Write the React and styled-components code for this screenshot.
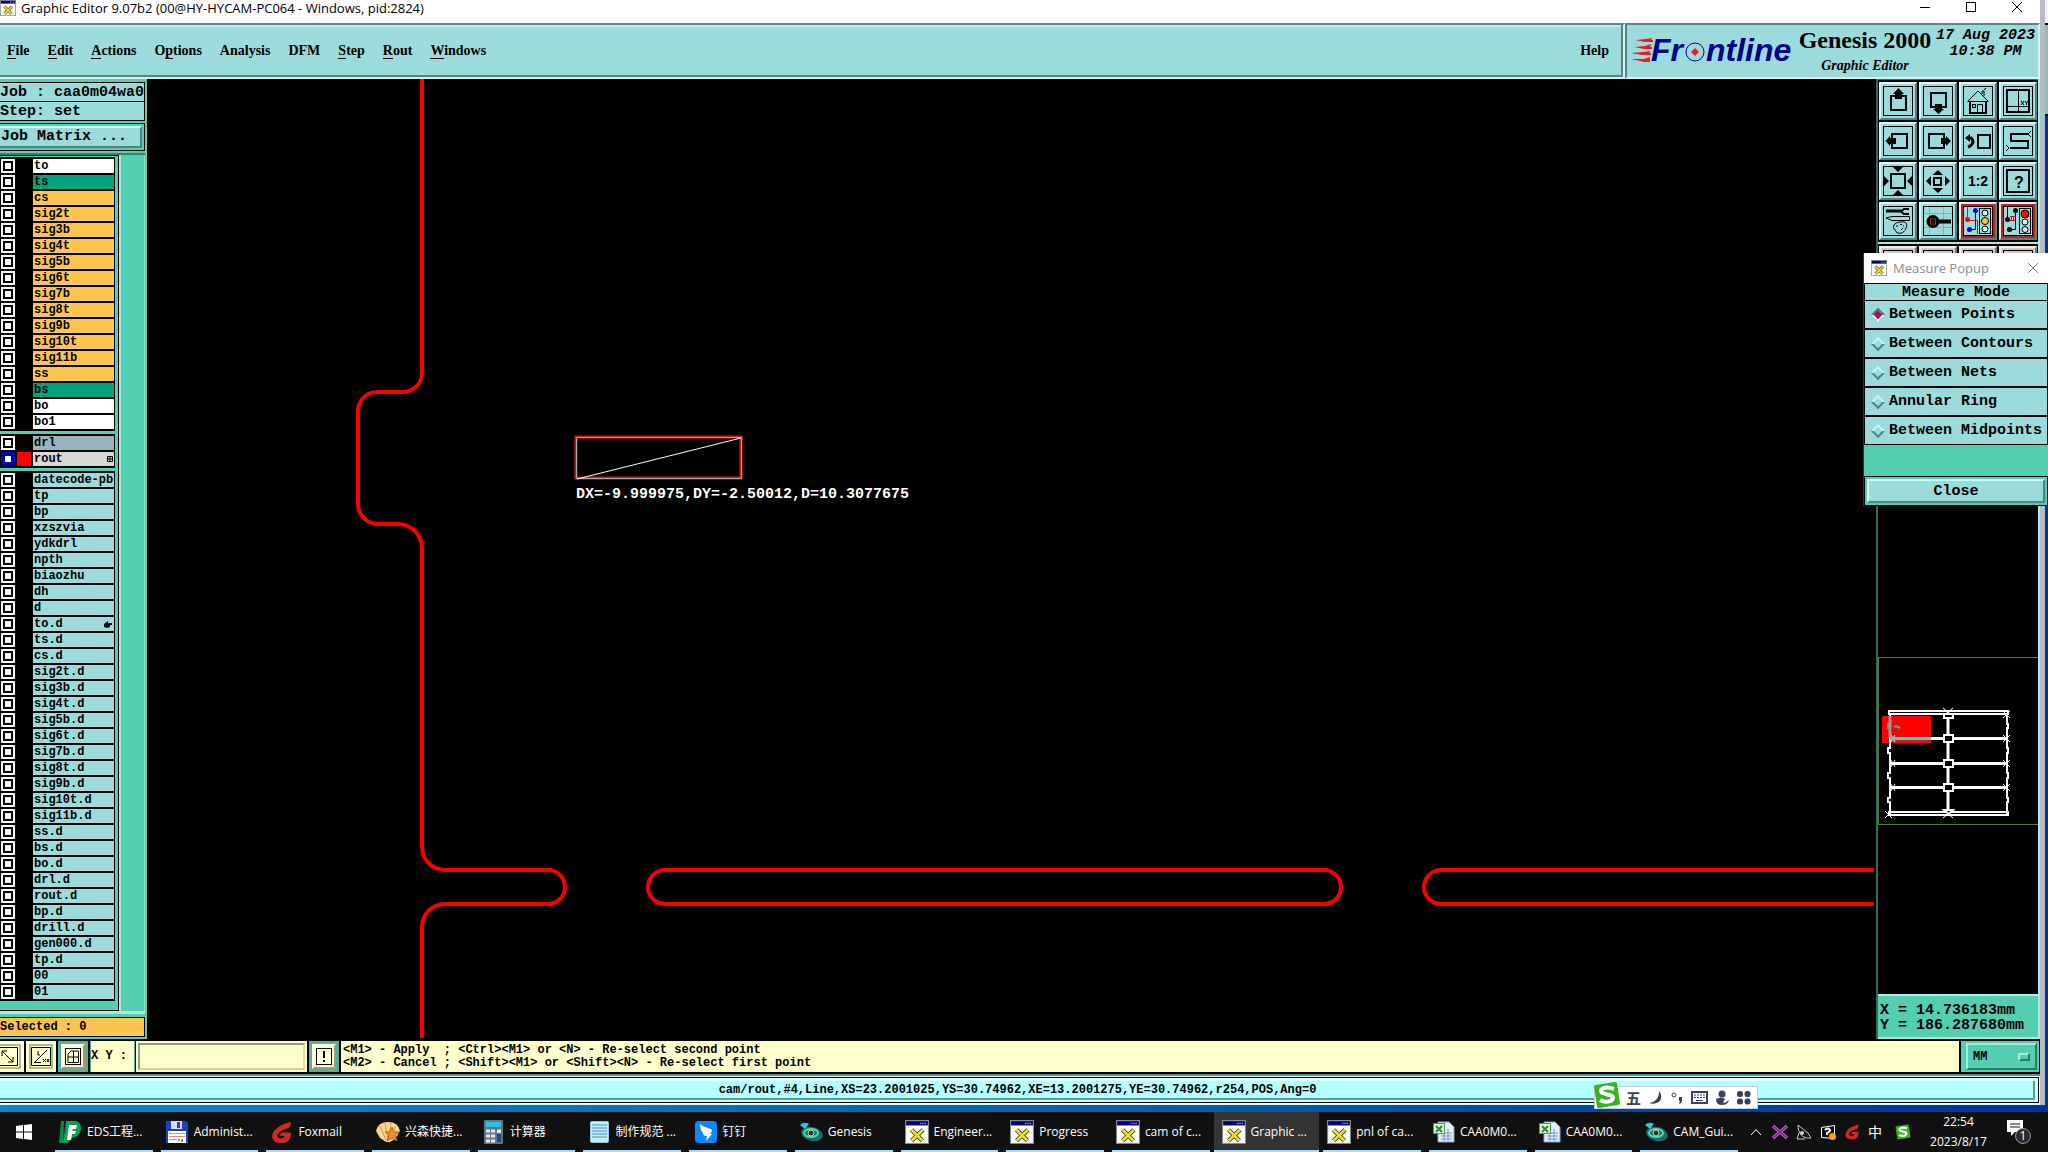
// App.jsx
import React, { useState } from 'react';
import styled, { createGlobalStyle, css } from 'styled-components';

const MONO = '"Liberation Mono", monospace';
const SERIF = '"Liberation Serif", serif';
const UI = '"Open Sans", "Noto Sans CJK SC", sans-serif';

const GlobalStyle = createGlobalStyle`
    * {
        box-sizing: border-box;
    }

    body {
        margin: 0;
        background: #0b4fa0;
    }

    button, input, select {
        margin: 0;
        padding: 0;
        border: 0;
        border-radius: 0;
        background: none;
        font: inherit;
        color: inherit;
    }
`;

const Desktop = styled.div`
    position: relative;
    display: flex;
    flex-direction: column;
    min-height: 100vh;
    overflow: hidden;
    background: linear-gradient(to right, #0a86cc 0%, #0a64b0 50%, #003399 100%);
    color: #000;
`;

const Workspace = styled.div`
    display: flex;
    flex: 1;
    margin-bottom: 7px;
`;

const Window = styled.div`
    flex: 1;
    min-width: 0;
    display: flex;
    flex-direction: column;
    background: #000;
`;

/* slice of the windows lying behind, at the right screen edge */
const Behind = styled.div`
    width: 8px;
    display: flex;
    flex-direction: column;
    border-left: 5px solid #b8bcc4;
    background: #003399;
`;

const BehindTitle = styled.div`
    height: 23px;
    background: #f4f4f4;
`;

const BehindBody = styled.div`
    height: 93px;
    border-top: 2px solid #000;
    border-bottom: 2px solid #000;
    background: #8dbfbf;
`;

/* ---------- title bar ---------- */

const TitleBar = styled.div`
    display: flex;
    align-items: center;
    height: 23px;
    background: #fff;
    font: 13px/16px ${UI};
`;

const TitleText = styled.span`
    flex: 1;
    padding: 0 0 7px 5px;
`;

const TitleIcon = styled.span`
    display: flex;
    padding-bottom: 8px;
`;

const WinButtons = styled.div`
    display: flex;
    padding: 0 0 8px;

    button {
        width: 46px;
        height: 14px;
        display: flex;
        align-items: center;
        justify-content: center;
    }
`;

/* ---------- header ---------- */

const Header = styled.div`
    display: flex;
    height: 56px;
    background: #9cdbdb;
`;

const panelEdge = css`
    border-style: solid;
    border-width: 2px;
    border-color: #5a8484 #d0f4f4 #d0f4f4 #5a8484;
`;

const Menu = styled.nav`
    flex: 1;
    display: flex;
    align-items: center;
    gap: 18px;
    padding: 0 14px 0 7px;
    border-top: 2px solid #5a8484;
    border-bottom: 2px solid #d0f4f4;
    border-right: 2px solid #d0f4f4;
    box-shadow: inset -2px -2px #5a8484, inset 0 2px #c4ecec;
    font: bold 14px/18px ${SERIF};
`;

const MenuItem = styled.button`
    margin-left: ${(p) => (p.$last ? 'auto' : '0')};

    span {
        border-bottom: 1px solid #000;
    }
`;

const Brand = styled.div`
    ${panelEdge}
    display: flex;
    width: 415px;
    padding: 3px 3px 0 5px;
`;

const Logo = styled.svg`
    width: 162px;
    height: 44px;
    margin-top: 2px;
`;

const Product = styled.div`
    flex: 1;
    text-align: center;
    white-space: nowrap;
    font: bold 24px/24px ${SERIF};

    div {
        font: italic bold 14px/28px ${SERIF};
    }
`;

const Clock = styled.div`
    text-align: center;
    white-space: pre;
    font: italic bold 15px/16px ${MONO};
`;

/* ---------- main area ---------- */

const Main = styled.div`
    flex: 1;
    display: flex;
    min-height: 0;
    background: #000;
`;

const Sidebar = styled.aside`
    width: 147px;
    display: flex;
    flex-direction: column;
    padding: 3px 0 2px;
    border-right: 2px solid #69c4ae;
    background: #53ceb0;
`;

const InfoBox = styled.div`
    height: ${(p) => (p.$tall ? '20px' : '19px')};
    border: solid #000;
    border-width: 1px 1px ${(p) => (p.$join ? '0' : '1px')} 0;
    background: ${(p) => (p.$gold ? '#fdc550' : '#9cdbdb')};
    font: bold ${(p) => (p.$small ? '12px' : '15px')}/19px ${MONO};
    white-space: pre;
    overflow: hidden;
`;

const MatrixFrame = styled.div`
    margin: 2px 0;
    padding: 2px 2px 2px 0;
    border: solid #000;
    border-width: 1px 1px 1px 0;
`;

const bevel = css`
    border-style: solid;
    border-width: 2px;
    border-color: #d4f8f8 #4f8282 #4f8282 #d4f8f8;
`;

const MatrixButton = styled.button`
    ${bevel}
    border-left: 0;
    display: block;
    width: 100%;
    height: 22px;
    padding-left: 1px;
    background: #9cdbdb;
    font: bold 15px/18px ${MONO};
    text-align: left;
`;

const ListArea = styled.div`
    flex: 1;
    display: flex;
    margin-bottom: 3px;
    border-top: 2px solid #35806e;
    border-bottom: 3px solid #a9ecdc;
`;

const ListFrame = styled.div`
    width: 119px;
    padding: 1px 3px 6px 0;
    border: solid #000;
    border-width: 1px 1px 1px 0;
`;

const Scroller = styled.div`
    flex: 1;
    border-left: 2px solid #a9ecdc;
    border-right: 1px solid #8fe0ca;
`;

const LayerGroup = styled.ul`
    display: flex;
    flex-direction: column;
    gap: 2px;
    margin: 0 0 3px;
    padding: 2px 1px 2px 1px;
    list-style: none;
    background: #000;
`;

const LayerRow = styled.li`
    display: grid;
    grid-template-columns: 14px 14px 1fr;
    gap: 2px;
    height: 14px;
`;

const LayerCheck = styled.input`
    appearance: none;
    width: 14px;
    height: 14px;
    border: 2px solid ${(p) => (p.$active ? '#0000b8' : '#fff')};
    background: #fff;
    box-shadow: inset 0 0 0 2px ${(p) => (p.$active ? '#0000b8' : '#000')};
`;

const Swatch = styled.span`
    background: ${(p) => p.$color || '#000'};
`;

const LayerName = styled.label`
    display: flex;
    align-items: center;
    justify-content: space-between;
    padding: 0 1px;
    background: ${(p) => p.$bg};
    font: bold 12px/14px ${MONO};
    white-space: nowrap;
    overflow: hidden;
`;

const Canvas = styled.div`
    flex: 1;
    min-width: 0;
    position: relative;
    background: #000;
    overflow: hidden;

    svg {
        position: absolute;
        width: 100%;
        height: 100%;
    }
`;

const ToolColumn = styled.aside`
    width: 164px;
    display: flex;
    flex-direction: column;
    border-left: 2px solid #2f6b5e;
    border-right: 2px solid #a9ecdc;
`;

const ToolGrid = styled.div`
    display: grid;
    grid-template-columns: repeat(4, 38px);
    gap: 2px;
    padding: 2px 1px;
    border-top: ${(p) => (p.$gray ? '0' : '1px')} solid #2f6b5e;
    border-bottom: 2px solid #a9ecdc;
`;

const ToolButton = styled.button`
    width: 38px;
    height: 38px;
    border: 2px solid;
    border-color: ${(p) => (p.$gray ? '#eee #777 #777 #eee' : '#d4f8f8 #4f8282 #4f8282 #d4f8f8')};
    padding: 2px;
    background: ${(p) => (p.$gray ? '#cfc8cc' : '#9cdbdb')};
    box-shadow: ${(p) => (p.$hot ? 'inset 0 0 0 2px #d01818' : 'none')};

    svg {
        display: block;
        width: 30px;
        height: 30px;
        background: ${(p) => (p.$gray ? '#cfc8cc' : '#9cdbdb')};
    }
`;

const Overview = styled.div`
    flex: 1;
    display: flex;
    flex-direction: column;
    justify-content: flex-end;
    padding-bottom: 169px;

    svg {
        display: block;
        width: 160px;
        height: 168px;
    }
`;

const Coords = styled.div`
    padding: 7px 0 4px 2px;
    border-top: 2px solid #a9ecdc;
    border-bottom: 2px solid #a9ecdc;
    background: #53ceb0;
    font: bold 15px/15px ${MONO};
    white-space: pre;
`;

/* ---------- command line ---------- */

const CommandBar = styled.div`
    display: flex;
    height: 35px;
    padding: 2px 0;
    background: #000;
`;

const CmdButton = styled.button`
    width: ${(p) => (p.$narrow ? '24px' : '30px')};
    margin-right: 2px;
    padding: 3px;
    display: flex;
    justify-content: flex-end;
    background: ${(p) => (p.$on ? '#53b09c' : '#ffffcc')};
    overflow: hidden;

    svg {
        flex: none;
        width: 24px;
        height: 25px;
        border: 2px solid;
        border-color: ${(p) => (p.$on ? '#ffffe8 #a09878 #a09878 #ffffe8' : '#b8b890')};
        background: #ffffcc;
    }
`;

const XYLabel = styled.label`
    width: 45px;
    border-left: 1px solid #53b09c;
    border-right: 1px solid #53b09c;
    background: #ffffcc;
    font: bold 12px/31px ${MONO};
    white-space: pre;
`;

const XYField = styled.div`
    width: 171px;
    margin: 0 2px 0 1px;
    padding: 2px;
    background: #ffffcc;
`;

const XYInput = styled.input`
    width: 100%;
    height: 27px;
    border: 2px solid;
    border-color: #98987a #e0e0b0 #d0d0a8 #98987a;
    padding: 0 4px;
    outline: none;
    font: bold 12px/20px ${MONO};
`;

const Hints = styled.div`
    flex: 1;
    padding: 3px 2px;
    background: #ffffcc;
    font: bold 12px/13px ${MONO};
    white-space: pre;
`;

const UnitBox = styled.div`
    position: relative;
    width: 78px;
    margin: 0 1px 0 2px;
    padding: 2px 2px 2px 5px;
    background: #53ceb0;

    svg {
        position: absolute;
        right: 9px;
        top: 12px;
    }
`;

const UnitSelect = styled.select`
    appearance: none;
    width: 100%;
    height: 27px;
    padding-left: 5px;
    border: 2px solid;
    border-color: #a9ecdc #2f7766 #2f7766 #a9ecdc;
    background: #53ceb0;
    font: bold 12px/16px ${MONO};
`;

const StatusFrame = styled.div`
    padding: 1px 1px 2px 0;
    border-top: 2px solid #5f8f8f;
    background: #dffcfc;
`;

const StatusLine = styled.div`
    height: 26px;
    padding-right: 3px;
    border: solid #000;
    border-width: 1px 1px 1px 0;
    background: #b4ffff;
    box-shadow: inset 0 3px #dcffff, inset -3px -2px #c4ffff, inset -5px -4px #5f9a9a;
    font: bold 12px/24px ${MONO};
    text-align: center;
`;

/* ---------- popup ---------- */

const Popup = styled.form`
    position: absolute;
    top: 253px;
    right: 0;
    width: 185px;
    background: #53ceb0;
    border: solid #333;
    border-width: 0 0 0 1px;
    font: bold 15px/17px ${MONO};
`;

const PopupTitle = styled.div`
    display: flex;
    align-items: center;
    height: 30px;
    padding: 0 9px 0 7px;
    background: #fff;
    color: #8c8c8c;
    font: 13px/16px ${UI};

    span {
        flex: 1;
        padding-left: 6px;
    }

    button {
        display: flex;
    }
`;

const PopupHead = styled.div`
    height: 17px;
    border: 1px solid #000;
    border-bottom: 0;
    background: #9cdbdb;
    line-height: 18px;
    text-align: center;
`;

const Option = styled.label`
    display: flex;
    align-items: center;
    height: 29px;
    padding: 0 0 0 5px;
    border: 1px solid #000;
    background: #9cdbdb;
    white-space: nowrap;
`;

const Diamond = styled.input`
    appearance: none;
    flex: none;
    width: 10px;
    height: 10px;
    margin: 0 6px 0 3px;
    border: 2px solid;
    border-color: #c8f4f4 #4f8282 #4f8282 #c8f4f4;
    transform: rotate(45deg);

    &:checked {
        border-color: #4f8282 #e8ffff #e8ffff #4f8282;
        background: #c0005a;
    }
`;

const CloseFrame = styled.div`
    margin-top: 31px;
    padding: 2px;
    border: 1px solid #000;
`;

const CloseButton = styled.button`
    ${bevel}
    display: block;
    width: 100%;
    height: 24px;
    background: #9cdbdb;
`;

/* ---------- input method bar ---------- */

const ImeBar = styled.div`
    position: absolute;
    right: 290px;
    bottom: 43px;
    display: flex;
    align-items: center;
    gap: 8px;
    height: 23px;
    padding: 0 6px 0 31px;
    border: 1px solid #c8ccd8;
    background: #fff;
    color: #3a3f5c;
    font: bold 15px/20px ${UI};
`;

const ImeLogo = styled.span`
    position: absolute;
    left: -2px;
    bottom: -1px;

    svg {
        display: block;
    }
`;

/* ---------- taskbar ---------- */

const Taskbar = styled.div`
    display: flex;
    height: 40px;
    background: #101010;
    color: #fff;
    font: 12px/16px ${UI};
`;

const StartButton = styled.button`
    width: 51px;
    padding: 0 0 0 16px;
    text-align: left;

    svg {
        display: block;
    }
`;

const Tasks = styled.div`
    flex: 1;
    display: flex;
    min-width: 0;
`;

const Task = styled.button`
    flex: 1 1 0;
    min-width: 0;
    position: relative;
    display: flex;
    align-items: center;
    gap: 5px;
    padding-left: 8px;
    background: ${(p) => (p.$active ? '#343434' : 'none')};
    white-space: nowrap;

    &::after {
        content: '';
        position: absolute;
        left: ${(p) => (p.$active ? '0' : '4px')};
        right: ${(p) => (p.$active ? '0' : '4px')};
        bottom: 0;
        height: 2px;
        background: #a8d8fa;
    }

    svg {
        flex: none;
    }
`;

const Tray = styled.div`
    display: flex;
    align-items: center;
    gap: 8px;
    width: 306px;
    padding: 0 4px 0 6px;

    button {
        display: flex;
    }
`;

const TrayText = styled.button`
    margin-right: 5px;
    font-size: 14px;
`;

const TrayClock = styled.div`
    flex: 1;
    text-align: center;
    line-height: 20px;
    white-space: nowrap;
`;

const Notice = styled.button`
    width: 30px;
    margin-right: 8px;
`;

const LAYERS = [
    [
        ['to', '#fff'], ['ts', '#00a47c'], ['cs', '#fdc550'], ['sig2t', '#fdc550'], ['sig3b', '#fdc550'],
        ['sig4t', '#fdc550'], ['sig5b', '#fdc550'], ['sig6t', '#fdc550'], ['sig7b', '#fdc550'],
        ['sig8t', '#fdc550'], ['sig9b', '#fdc550'], ['sig10t', '#fdc550'], ['sig11b', '#fdc550'],
        ['ss', '#fdc550'], ['bs', '#00a47c'], ['bo', '#fff'], ['bo1', '#fff'],
    ],
    [['drl', '#98b4bc'], ['rout', '#d8d8d8']],
    [
        'datecode-pbc', 'tp', 'bp', 'xzszvia', 'ydkdrl', 'npth', 'biaozhu', 'dh', 'd', 'to.d', 'ts.d', 'cs.d',
        'sig2t.d', 'sig3b.d', 'sig4t.d', 'sig5b.d', 'sig6t.d', 'sig7b.d', 'sig8t.d', 'sig9b.d', 'sig10t.d',
        'sig11b.d', 'ss.d', 'bs.d', 'bo.d', 'drl.d', 'rout.d', 'bp.d', 'drill.d', 'gen000.d', 'tp.d', '00', '01',
    ].map((name) => [name, '#9cdbdb']),
];

const MENU = [
    ['', 'F', 'ile'], ['', 'E', 'dit'], ['', 'A', 'ctions'], ['O', 'p', 'tions'], ['Analysis', '', ''],
    ['DFM', '', ''], ['', 'S', 'tep'], ['', 'R', 'out'], ['', 'W', 'indows'],
];

const MODES = ['Between Points', 'Between Contours', 'Between Nets', 'Annular Ring', 'Between Midpoints'];

const line = { fill: 'none', stroke: '#000', strokeWidth: 2 };
const thin = { fill: 'none', stroke: '#000', strokeWidth: 1 };

const TOOLS = [
    ['Pan up', <><rect x="8" y="10" width="15" height="14" {...line} /><path d="M15.5 2L21 8H19V13H12V8H10Z" /></>],
    ['Pan down', <><rect x="8" y="7" width="15" height="14" {...line} /><path d="M15.5 28L21 23H19V18H12V23H10Z" /></>],
    ['Home', (
        <>
            <path d="M4.5 15.5L15 5L25.5 15.5M5 15.5H25M14.5 27V18.5H19.5V27M19 8V5H21V10M21 4L23 2" {...thin} />
            <rect x="9.5" y="18.5" width="3" height="3" {...thin} />
            <path d="M7 15V27H23V15" {...line} />
        </>
    )],
    ['Coordinates', (
        <>
            <rect x="4" y="4" width="22" height="22" {...line} />
            <path d="M15.5 4V26M4 20.5H26" {...thin} />
            <path d="M18 15l3 4M21 15l-3 4M22 15l1.5 2M25 15l-1.5 2V19" {...thin} />
        </>
    )],
    ['Pan left', <><rect x="9" y="8" width="15" height="14" {...line} /><path d="M2.5 15L7 10V12H13V18H7V20Z" /></>],
    ['Pan right', <><rect x="6" y="8" width="15" height="14" {...line} /><path d="M28 15L23 10V12H18V18H23V20Z" /></>],
    ['Previous view', (
        <>
            <rect x="15" y="9" width="12" height="13" {...line} />
            <path d="M5 12H8C11 14 11 19 5 21" fill="none" stroke="#000" strokeWidth="3" />
            <path d="M2 12L7 8V16Z" />
        </>
    )],
    ['Serpentine', <><path d="M25 8H8V15H25V22H7" {...line} /><path d="M25 8l3 -3M25 8l3 3M6 22l-3 -3M6 22l-3 3" {...thin} /></>],
    ['Fit view', (
        <>
            <rect x="8" y="8" width="14" height="14" {...line} />
            <path d="M10 1H20L15 6ZM10 29H20L15 24ZM1 10V20L6 15ZM29 10V20L24 15Z" />
        </>
    )],
    ['Zoom area', (
        <>
            <rect x="11" y="12" width="7" height="7" {...line} />
            <path d="M9.5 9L15 4L20 9ZM9.5 22L15 27L20 22ZM8 10V20L3 15ZM22 10V20L27 15Z" />
        </>
    )],
    ['Scale', <text x="15" y="20" textAnchor="middle" fontFamily="Liberation Sans" fontWeight="bold" fontSize="14">1:2</text>],
    ['Query', (
        <>
            <rect x="4" y="4" width="22" height="22" {...line} />
            <text x="16" y="22" textAnchor="middle" fontFamily="Liberation Sans" fontWeight="bold" fontSize="16">?</text>
        </>
    )],
    ['Tools', (
        <>
            <path d="M3 5H18" stroke="#000" strokeWidth="3" />
            <path d="M26 3H21L18 5.5L21 8H26" {...line} />
            <path d="M3 12L9 10.5H26.5V14.5H9Z" {...thin} />
            <path d="M11 23C9 19 13 16 18 16C23 15 25 18 23 22C22 26 18 28 15 27C12 27 14 24 11 23Z" {...thin} />
            <path d="M13 20h2M17 18.5h2M20 20h1M18 24l2 -2" {...thin} />
        </>
    )],
    ['Snap', (
        <>
            <path d="M6.5 1V29M20.5 1V29M1 7.5H29M1 21.5H29" stroke="#a8a0a8" />
            <path d="M12 15.5H28" stroke="#000" strokeWidth="4" />
            <circle cx="10" cy="15.5" r="6.5" />
            <rect x="7.5" y="13" width="5" height="5" fill="none" stroke="#c02020" />
            <rect x="9.5" y="15" width="1" height="1" fill="#c02020" />
        </>
    )],
    ['Net check', (
        <>
            <path d="M4.5 1V14.5H14.5V28" fill="none" stroke="#e01010" />
            <path d="M12.5 5V23.5H6" fill="none" stroke="#0000d8" />
            <circle cx="4.5" cy="13.5" r="2.5" fill="#e01010" />
            <circle cx="12.5" cy="4.5" r="2.5" fill="#0000d8" />
            <circle cx="6.5" cy="23.5" r="2.5" fill="#0000d8" />
            <rect x="16.5" y="2.5" width="11" height="25" {...thin} />
            <circle cx="22" cy="7" r="3" fill="#d4f4f4" stroke="#000" />
            <circle cx="22" cy="15" r="3.5" fill="#fdc550" stroke="#000" />
            <circle cx="22" cy="23" r="3" fill="#d4f4f4" stroke="#000" />
        </>
    )],
    ['DRC stop', (
        <>
            <path d="M4.5 1V13M12.5 5V23.5H6" {...thin} />
            <path d="M7 10.5H12M7 14.5H12M8.5 10V15M10.5 10V15" stroke="#e01010" fill="none" />
            <circle cx="4.5" cy="13.5" r="2.5" />
            <circle cx="12.5" cy="4.5" r="2.5" />
            <circle cx="6.5" cy="23.5" r="2.5" />
            <rect x="16.5" y="2.5" width="11" height="25" {...thin} />
            <circle cx="22" cy="8" r="4" fill="#f01010" stroke="#000" />
            <circle cx="22" cy="16" r="3" fill="#d4f4f4" stroke="#000" />
            <circle cx="22" cy="23.5" r="3" fill="#d4f4f4" stroke="#000" />
        </>
    )],
];

const XIcon = ({ size }) => (
    <svg width={size} height={size} viewBox="0 0 22 22">
        <rect x="0.5" y="0.5" width="21" height="21" fill="#fff" stroke="#888" />
        <rect x="1" y="1" width="20" height="4" fill="#000080" />
        <path d="M14 3h1M16 3h1M18 3h1" stroke="#fff" />
        <path d="M6 9L16 19M16.5 9L6 19" stroke="#333" strokeWidth="4" />
        <path d="M6 9L16 19M16.5 9L6 19" stroke="#f0e020" strokeWidth="2.5" />
    </svg>
);

const FoxIcon = ({ size }) => (
    <svg width={size} height={size} viewBox="0 0 22 22">
        <path d="M20 1C12 3 4 6 2 14C2 20 7 21 12 21C18 21 20 17 20 11H11L9 14H14C14 17 7 18 7 14C8 10 13 8 17 7C19 6 20 4 20 1Z" fill="#d42a1c" />
    </svg>
);

const SogouIcon = ({ size }) => (
    <svg width={size} height={size} viewBox="0 0 28 28">
        <path d="M3 4Q1 4 1 6L4 25Q4 27 6 27L25 24Q27 24 27 22L24 3Q24 1 22 1Z" fill="#35b41c" />
        <path d="M21 8C14 5 8 7 8 10C8 14 21 13 20 17C19 21 12 22 7 19" fill="none" stroke="#fff" strokeWidth="4" />
    </svg>
);

const EyeIcon = () => (
    <svg width="24" height="22" viewBox="0 0 24 22">
        <ellipse cx="13" cy="13" rx="11" ry="7" fill="#1c6c68" transform="rotate(15 13 13)" />
        <path d="M1 4Q5 0 10 3L6 8Z" fill="#3cc4cc" />
        <ellipse cx="12" cy="12" rx="7" ry="4" fill="none" stroke="#48d8c4" strokeWidth="2" />
        <circle cx="12" cy="12" r="3" fill="#183c50" stroke="#e0dc60" />
    </svg>
);

const ExcelIcon = () => (
    <svg width="22" height="22" viewBox="0 0 22 22">
        <path d="M5 1H16L21 6V21H5Z" fill="#e8f0fa" stroke="#8aa0c0" />
        <path d="M8 12H19M8 15H19M8 18H19M11 10V20M15 8V20" stroke="#6c94d0" />
        <rect x="0.5" y="2.5" width="11" height="10" fill="#e4f4e0" stroke="#4c9a44" />
        <path d="M3 5L9 11M9 5L3 11" stroke="#2c8c2c" strokeWidth="2" />
    </svg>
);

const TASKS = [
    ['EDS工程...', (
        <svg width="23" height="24" viewBox="0 0 23 24">
            <path d="M5 1H2L0 23H4Z" fill="#0c8c44" />
            <path d="M7 1H17Q23 3 22 10Q20 17 13 18L9 23H4Z" fill="#12a050" />
            <path d="M8 20L10 5H18L17 9H13.5V11H17L16 14H13L12 20Z" fill="#fff" />
        </svg>
    )],
    ['Administ...', (
        <svg width="24" height="24" viewBox="0 0 24 24">
            <path d="M1 1H21L23 3V23H1Z" fill="#1c40c0" />
            <rect x="6" y="1" width="11" height="8" fill="#d8dce8" />
            <rect x="12" y="2" width="3" height="6" fill="#1c40c0" />
            <rect x="3" y="11" width="18" height="12" fill="#fff" />
            <path d="M4 13.5H20M4 16.5H20M4 19.5H12" stroke="#e08888" />
            <path d="M13 20h2M17 19v3" stroke="#222" />
        </svg>
    )],
    ['Foxmail', <FoxIcon size={23} />],
    ['兴森快捷...', (
        <svg width="24" height="22" viewBox="0 0 24 22">
            <path d="M0 10Q2 1 12 1Q22 1 24 10L19 18L14 21H10L4 17Z" fill="#f8d890" />
            <path d="M4 5L10 19M9 2L12 19M15 2L12 19M20 5L13 19" stroke="#d8983c" />
            <path d="M16 6L18 11L23 11L19 14L21 20L16 17L11 20L13 14L9 11H14Z" fill="#f09030" stroke="#b86418" />
        </svg>
    )],
    ['计算器', (
        <svg width="23" height="24" viewBox="-2 0 23 24">
            <rect width="19" height="24" rx="1" fill="#647484" />
            <rect x="2" y="2" width="15" height="5" fill="#30c0e8" />
            <path d="M2 11H12M2 16H12M2 21H12" stroke="#e0e8f0" strokeWidth="3" strokeDasharray="4 1" />
            <path d="M15 9.5V13" stroke="#e0e8f0" strokeWidth="4" />
            <path d="M15 14V22" stroke="#1c4c88" strokeWidth="4" />
        </svg>
    )],
    ['制作规范 ...', (
        <svg width="23" height="22" viewBox="-3 0 23 22">
            <rect x="0.5" y="0.5" width="18" height="21" rx="1" fill="#c8ecfc" stroke="#98c8e0" />
            <path d="M2 4H17M2 7H17M2 10H17M2 13H17M2 16H17" stroke="#3c94cc" />
        </svg>
    )],
    ['钉钉', (
        <svg width="24" height="22" viewBox="-2 0 24 22">
            <rect width="22" height="22" rx="4" fill="#1088ff" />
            <path d="M5 3C8 6 15 7 17 9C17 11 15 13 15 13H17L11 20L12 15H10C8 14 8 13 8 12C6 10 5 7 5 3Z" fill="#fff" />
        </svg>
    )],
    ['Genesis', <EyeIcon />],
    ['Engineer...', <XIcon size={24} />],
    ['Progress', <XIcon size={24} />],
    ['cam of c...', <XIcon size={24} />],
    ['Graphic ...', <XIcon size={24} />],
    ['pnl of ca...', <XIcon size={24} />],
    ['CAA0M0...', <ExcelIcon />],
    ['CAA0M0...', <ExcelIcon />],
    ['CAM_Gui...', <EyeIcon />],
];

function TopBar() {
    return (
        <>
            <TitleBar>
                <TitleIcon><XIcon size={16} /></TitleIcon>
                <TitleText>Graphic Editor 9.07b2 (00@HY-HYCAM-PC064 - Windows, pid:2824)</TitleText>
                <WinButtons>
                    <button aria-label="Minimize"><svg width="11" height="11"><path d="M0 5.5H10" {...thin} /></svg></button>
                    <button aria-label="Maximize"><svg width="11" height="11"><rect x="0.5" y="0.5" width="9" height="9" {...thin} /></svg></button>
                    <button aria-label="Close window"><svg width="11" height="11"><path d="M0 0L10 10M10 0L0 10" {...thin} /></svg></button>
                </WinButtons>
            </TitleBar>
            <Header>
                <Menu>
                    {MENU.map(([before, key, after]) => (
                        <MenuItem key={before + key + after}>{before}{key && <span>{key}</span>}{after}</MenuItem>
                    ))}
                    <MenuItem $last>Help</MenuItem>
                </Menu>
                <Brand>
                    <Logo viewBox="0 0 162 44">
                        <g fill="#ee1c1c">
                            <path d="M4 10L14 9L20 8L19 11L14 12ZM3 17L13 16L19 14L18 18L13 19ZM0 23L11 22L18 21L17 25L11 25ZM0 29L12 29L18 27L17 32L12 31Z" />
                            <path d="M4 10H21V12H14ZM3 17H20V19H13ZM0 23H19V25H11ZM0 29H18V32H12Z" />
                        </g>
                        <g fill="#00008c" fontFamily="Liberation Sans" fontWeight="bold" fontStyle="italic" fontSize="32">
                            <text x="19" y="31">Fr</text>
                            <text x="74" y="31">ntline</text>
                        </g>
                        <circle cx="63" cy="22" r="9" fill="none" stroke="#00008c" strokeWidth="1" />
                        <path d="M63 18L67 22L63 26L59 22Z" fill="#ee1c1c" />
                    </Logo>
                    <Product>Genesis 2000<div>Graphic Editor</div></Product>
                    <Clock>{'17 Aug 2023\n10:38 PM'}</Clock>
                </Brand>
            </Header>
        </>
    );
}

function LayerPanel() {
    return (
        <Sidebar>
            <InfoBox $join>Job : caa0m04wa0</InfoBox>
            <InfoBox $tall>Step: set</InfoBox>
            <MatrixFrame><MatrixButton>Job Matrix ...</MatrixButton></MatrixFrame>
            <ListArea>
                <ListFrame>
                    {LAYERS.map((group, i) => (
                        <LayerGroup key={i}>
                            {group.map(([name, bg]) => (
                                <LayerRow key={name}>
                                    <LayerCheck type="checkbox" id={'layer-' + name} $active={name === 'rout'} />
                                    <Swatch $color={name === 'rout' && '#ff0000'} />
                                    <LayerName htmlFor={'layer-' + name} $bg={bg}>
                                        {name}
                                        {name === 'rout' && <svg width="6" height="6"><path d="M0.5 0.5H5.5V5.5H0.5ZM3 0V6M0 3H6" {...thin} /></svg>}
                                        {name === 'to.d' && <svg width="9" height="8"><path d="M0 4L4 1V3H8V5H6V7L3 8L0 7Z" /></svg>}
                                    </LayerName>
                                </LayerRow>
                            ))}
                        </LayerGroup>
                    ))}
                </ListFrame>
                <Scroller />
            </ListArea>
            <InfoBox $tall $gold $small>Selected : 0</InfoBox>
        </Sidebar>
    );
}

function Drawing() {
    return (
        <Canvas>
            <svg viewBox="0 0 1729 960" preserveAspectRatio="xMinYMin slice">
                <g fill="none" stroke="#f60000" strokeWidth="4">
                    <path d="M275 0V294A19 19 0 0 1 256 313H230A19 19 0 0 0 211 332V425A20 20 0 0 0 231 445H251A24 24 0 0 1 275 469V768A23 23 0 0 0 298 791H401A17 17 0 0 1 401 825H298A23 23 0 0 0 275 848V959" />
                    <rect x="501" y="791" width="693" height="34" rx="17" />
                    <path d="M1727 791H1294A17 17 0 0 0 1294 825H1727" />
                    <rect x="429" y="358" width="165" height="41" strokeWidth="3" stroke="#d01818" />
                </g>
                <path d="M429.5 358.5H594.5V399.5H429.5Z" fill="none" stroke="#b8a0a0" />
                <path d="M430 400L594 359" fill="none" stroke="#fff" />
                <text x="429" y="419" fill="#fff" fontFamily="Liberation Mono" fontSize="15" fontWeight="bold">
                    DX=-9.999975,DY=-2.50012,D=10.3077675
                </text>
            </svg>
        </Canvas>
    );
}

function ToolPanel() {
    return (
        <ToolColumn>
            <ToolGrid>
                {TOOLS.map(([name, icon], i) => (
                    <ToolButton key={name} aria-label={name} $hot={i > 13}>
                        <svg viewBox="0 0 30 30"><rect x="0.5" y="0.5" width="29" height="29" {...thin} />{icon}</svg>
                    </ToolButton>
                ))}
            </ToolGrid>
            <ToolGrid $gray>
                {['Add', 'Delete', 'Move', 'Copy'].map((name) => (
                    <ToolButton key={name} aria-label={name} $gray>
                        <svg viewBox="0 0 30 30"><rect x="0.5" y="0.5" width="29" height="29" {...thin} /></svg>
                    </ToolButton>
                ))}
            </ToolGrid>
            <Overview>
                <svg viewBox="0 0 160 168">
                    <rect x="0.5" y="0.5" width="160" height="167" fill="none" stroke="#4c8030" />
                    <rect x="4" y="59" width="49" height="27" fill="#ff0000" />
                    <g fill="none" stroke="#fff" strokeWidth="2">
                        <path d="M11 54H130V57H11ZM11 155H130V158H11Z" />
                        <path d="M70 57V155M12 81.5H129M12 106.5H129M12 130.5H129" strokeWidth="3" />
                        <path d="M12 57V67H10V71H12V91H10V96H12V116H10V121H12V141H10V145H12V157" />
                        <path d="M129 57V67H130V71H129V91H130V96H129V116H130V121H129V141H130V145H129V157" />
                    </g>
                    <g fill="#000" stroke="#fff" strokeWidth="2">
                        <path d="M66 57H75V61H66ZM66 78H75V85H66ZM66 103H75V110H66ZM66 127H75V134H66ZM66 153H75L71 157Z" />
                    </g>
                    <path d="M65 51l10 8M75 51l-10 8M65 161l10 -8M75 161l-10 -8M7 161l7 -7M7 154l7 7M13 78l4 7M17 78l-4 7M13 103l4 7M17 103l-4 7M13 127l4 7M17 127l-4 7M125 78l7 7M132 78l-7 7M125 103l7 7M132 103l-7 7M125 127l7 7M132 127l-7 7M125 54l7 7M132 54l-7 7" stroke="#fff" fill="none" />
                    <path d="M12 59V80" stroke="#b09090" strokeWidth="3" />
                    <path d="M12 81.5H53" stroke="#20e0e8" strokeWidth="3" />
                    <path d="M12 67H10V71H12M16 69.5H19L22 71" stroke="#50a8a8" fill="none" strokeWidth="2" />
                </svg>
            </Overview>
            <Coords>{'X = 14.736183mm\nY = 186.287680mm'}</Coords>
        </ToolColumn>
    );
}

function CommandLine() {
    const [xy, setXy] = useState('');
    return (
        <>
            <CommandBar>
                <CmdButton $narrow aria-label="Line">
                    <svg viewBox="0 0 20 21"><path d="M0 1.5H18.5V19.5H0M3 5L14 16M3 10V5H8M9 16H14V11" {...thin} /></svg>
                </CmdButton>
                <CmdButton aria-label="Angle">
                    <svg viewBox="0 0 20 21"><path d="M0.5 1.5H19.5V19.5H0.5ZM3 17L16 4M7 5V9H9M3 16.5H10M12 13l3 3M12 16l3 -3M16 13l2 3M18 13l-2 3" {...thin} /></svg>
                </CmdButton>
                <CmdButton $on aria-label="Grid">
                    <svg viewBox="0 0 20 21"><rect x="2.5" y="2.5" width="15" height="16" {...thin} /><path d="M5 16.5V8L8 5H15.5V16.5ZM10.5 5V16M5 11H15" {...thin} /></svg>
                </CmdButton>
                <XYLabel htmlFor="xy">X Y :</XYLabel>
                <XYField><XYInput id="xy" value={xy} onChange={(e) => setXy(e.target.value)} /></XYField>
                <CmdButton $on aria-label="Alert">
                    <svg viewBox="0 0 20 21"><rect x="2.5" y="2.5" width="15" height="16" {...thin} /><path d="M10 5V12M10 14V16" {...line} /></svg>
                </CmdButton>
                <Hints>{'<M1> - Apply  ; <Ctrl><M1> or <N> - Re-select second point\n<M2> - Cancel ; <Shift><M1> or <Shift><N> - Re-select first point'}</Hints>
                <UnitBox>
                    <UnitSelect aria-label="Units" defaultValue="MM">
                        <option>MM</option>
                        <option>INCH</option>
                    </UnitSelect>
                    <svg width="12" height="8"><path d="M12 0V8H0Z" fill="#2f7766" /><path d="M0 8V0H12Z" fill="#a9ecdc" /><rect x="2" y="2" width="8" height="4" fill="#53ceb0" /></svg>
                </UnitBox>
            </CommandBar>
            <StatusFrame>
                <StatusLine>cam/rout,#4,Line,XS=23.2001025,YS=30.74962,XE=13.2001275,YE=30.74962,r254,POS,Ang=0</StatusLine>
            </StatusFrame>
        </>
    );
}

function MeasurePopup() {
    const [mode, setMode] = useState(MODES[0]);
    return (
        <Popup>
            <PopupTitle>
                <XIcon size={16} />
                <span>Measure Popup</span>
                <button type="button" aria-label="Close popup"><svg width="11" height="11"><path d="M0 0L10 10M10 0L0 10" stroke="#888" /></svg></button>
            </PopupTitle>
            <PopupHead>Measure Mode</PopupHead>
            {MODES.map((m) => (
                <Option key={m}>
                    <Diamond type="radio" name="mode" checked={mode === m} onChange={() => setMode(m)} />
                    {m}
                </Option>
            ))}
            <CloseFrame><CloseButton type="button">Close</CloseButton></CloseFrame>
        </Popup>
    );
}

function ImeTools() {
    return (
        <ImeBar>
            <ImeLogo><SogouIcon size={28} /></ImeLogo>
            <span>五</span>
            <svg width="14" height="14"><path d="M10 0C16 8 9 15 0 12C7 11 10 7 10 0Z" fill="#3a3f5c" /></svg>
            <svg width="12" height="14"><circle cx="3" cy="4" r="2" fill="none" stroke="#3a3f5c" /><path d="M8 6h3v3q0 3 -3 4l1 -3h-1z" fill="#3a3f5c" /></svg>
            <svg width="17" height="13"><rect x="1" y="1" width="15" height="11" fill="none" stroke="#3a3f5c" strokeWidth="2" /><path d="M3 4H14M3 6.5H14" stroke="#3a3f5c" strokeDasharray="2 1" /><path d="M5 9.5H12" stroke="#3a3f5c" /></svg>
            <svg width="13" height="15"><circle cx="6" cy="4" r="3.5" fill="#3a3f5c" /><path d="M0 9Q6 6 9 9L7 12L9 13L13 10Q12 15 6 15Q0 15 0 9Z" fill="#3a3f5c" /></svg>
            <svg width="14" height="14" fill="#3a3f5c"><rect width="6" height="6" rx="2.5" /><rect x="7.5" width="6" height="6" rx="2.5" /><rect y="7.5" width="6" height="6" rx="2.5" /><rect x="7.5" y="7.5" width="6" height="6" rx="2.5" /></svg>
        </ImeBar>
    );
}

function WinTaskbar() {
    return (
        <Taskbar>
            <StartButton aria-label="Start">
                <svg width="16" height="16" fill="#fff"><path d="M0 2L7 1V7.5H0ZM8 1L16 0V7.5H8ZM0 8.5H7V15L0 14ZM8 8.5H16V16L8 15Z" /></svg>
            </StartButton>
            <Tasks>
                {TASKS.map(([name, icon], i) => (
                    <Task key={i} $active={i === 11}>{icon}{name}</Task>
                ))}
            </Tasks>
            <Tray>
                <button aria-label="Show hidden icons"><svg width="16" height="16"><path d="M3 11L8 5.5L13 11" fill="none" stroke="#fff" /></svg></button>
                <button aria-label="X server"><svg width="16" height="16"><path d="M1 2L15 14M15 2L1 14" stroke="#d8a0e0" strokeWidth="3" /><path d="M1 2L15 14M15 2L1 14" stroke="#8c1c9c" strokeWidth="2" /></svg></button>
                <button aria-label="Satellite"><svg width="16" height="16"><path d="M2 1C2 9 6 15 15 14M2 1L12 9L15 14M3 9L1 15H9" fill="none" stroke="#ccc" /><circle cx="6" cy="9" r="2" fill="#ccc" /></svg></button>
                <button aria-label="Help service"><svg width="16" height="16"><path d="M1.5 3.5L14.5 1.5V14.5L1.5 13.5Z" fill="none" stroke="#fff" /><path d="M5 6Q8 3 10 6Q10 8 7 9V11" fill="none" stroke="#fff" strokeWidth="2" /><circle cx="12.5" cy="12.5" r="3.5" fill="#ff9c10" /></svg></button>
                <button aria-label="Foxmail"><FoxIcon size={16} /></button>
                <TrayText>中</TrayText>
                <button aria-label="Sogou"><SogouIcon size={16} /></button>
                <TrayClock>22:54<br />2023/8/17</TrayClock>
                <Notice aria-label="Notifications">
                    <svg width="26" height="26" viewBox="0 0 26 26">
                        <path d="M1 1H17V13H9L5 17V13H1Z" fill="#fff" />
                        <path d="M4 5H14M4 8H14" stroke="#101010" />
                        <circle cx="17" cy="17" r="7.5" fill="#2c2c2c" stroke="#999" />
                        <text x="17" y="21" fill="#fff" fontFamily="Open Sans" fontSize="12" textAnchor="middle">1</text>
                    </svg>
                </Notice>
            </Tray>
        </Taskbar>
    );
}

function App() {
    return (
        <Desktop>
            <GlobalStyle />
            <Workspace>
                <Window>
                    <TopBar />
                    <Main>
                        <LayerPanel />
                        <Drawing />
                        <ToolPanel />
                    </Main>
                    <CommandLine />
                </Window>
                <Behind>
                    <BehindTitle />
                    <BehindBody />
                </Behind>
            </Workspace>
            <WinTaskbar />
            <MeasurePopup />
            <ImeTools />
        </Desktop>
    );
}

export default App;
